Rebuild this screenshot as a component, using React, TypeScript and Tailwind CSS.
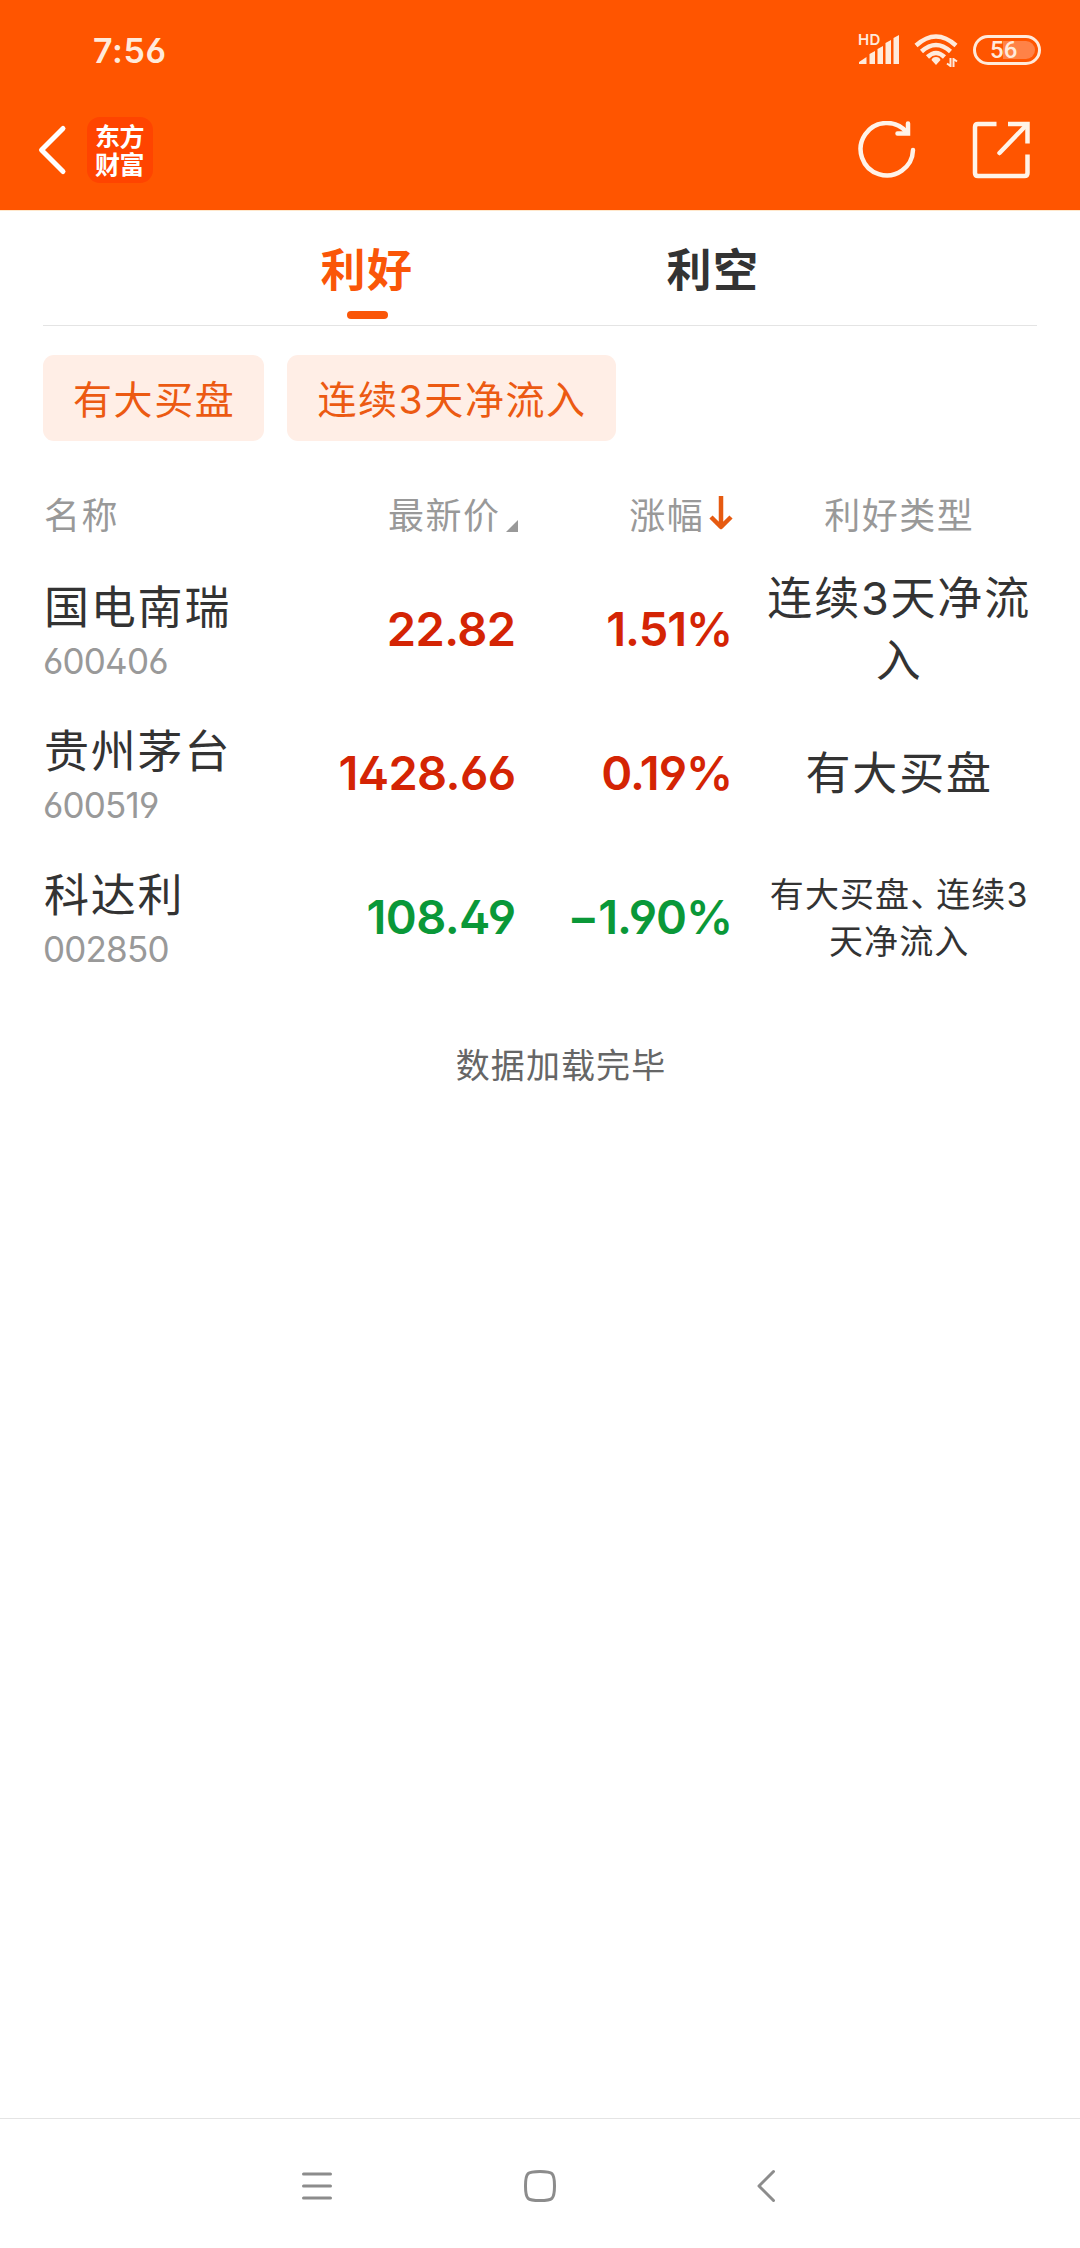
const TABS = [
  { label: '利好', active: true },
  { label: '利空', active: false },
];

const FILTERS = ['有大买盘', '连续3天净流入'];

const STOCKS = [
  { name: '国电南瑞', code: '600406', price: '22.82', change: '1.51%', up: true, types: ['连续3天净流入'] },
  { name: '贵州茅台', code: '600519', price: '1428.66', change: '0.19%', up: true, types: ['有大买盘'] },
  { name: '科达利', code: '002850', price: '108.49', change: '−1.90%', up: false, types: ['有大买盘', '连续3天净流入'] },
];

export default function App() {
  return (
    <div className="w-[1080px] h-[2248px] bg-white flex flex-col overflow-hidden text-[#333333] font-['Inter','Noto_Sans_CJK_SC',sans-serif]">
      <div className="h-[211px] shrink-0 bg-[#ff5500] border-b border-[#ffe8cc]">
        <StatusBar />
        <TitleBar />
      </div>

      <main className="flex-1 px-[43px]">
        <Tabs />
        <div className="flex gap-[23px] mt-[29px]">
          {FILTERS.map((f) => (
            <button key={f} className="h-[86px] pl-[30px] pr-[29px] rounded-[11px] bg-[#ffeee6] text-[#ec5a12] text-[39px] leading-[89px] tracking-[1.6px] whitespace-nowrap">
              {f}
            </button>
          ))}
        </div>
        <TableHead />
        {STOCKS.map((s) => (
          <StockRow key={s.code} {...s} />
        ))}
        <div className="mt-[52px] pl-[42px] text-center text-[34px] leading-[50px] tracking-[1.1px] text-[#666666]">数据加载完毕</div>
      </main>

      <NavBar />
    </div>
  );
}

function StatusBar() {
  return (
    <div className="h-[100px] pl-[93px] pr-[39px] flex items-center justify-between text-[#ffeadb]">
      <span className="mt-[2px] text-[34px] font-semibold leading-[40px] tracking-[0.6px] [font-feature-settings:'ss01']">7:56</span>
      <div className="flex items-center">
        <div className="relative w-[42px] h-[34px] mr-[14px]">
          <span className="absolute left-0 -top-[1px] text-[15px] font-semibold leading-[15px] tracking-[0.3px]">HD</span>
          <svg className="absolute inset-0" width="42" height="34" viewBox="0 0 42 34" fill="currentColor">
            <path d="M1 31V29L8.500 24V31Z M11.500 31V21L17 18V31Z M19.500 31V16L25 13V31Z M27.500 31V10L33 7V31Z M35.500 31V5L41 2V31Z" />
          </svg>
        </div>
        <svg className="mr-[15px]" width="44" height="34" viewBox="0 0 44 34" fill="none" stroke="currentColor" strokeWidth="4.500">
          <path d="M2 12.5Q22 -5.500 42 12.5" />
          <path d="M7.5 18.5Q22 5.500 36.500 18.5" />
          <path d="M13.500 24Q22 16 30.500 24" />
          <path d="M22 24a4.500 4 0 0 1 4.500 3L22 32L17.500 27a4.500 4 0 0 1 4.500-3Z" fill="currentColor" stroke="none" />
          <path d="M36.500 25V34M33 30.500L36.500 33M39.500 34V25M43 28.500L39.500 26" strokeWidth="2" />
        </svg>
        <div className="relative w-[68px] h-[30px] rounded-full border-[3px] border-[#ffeadb]">
          <div className="absolute right-[3px] top-[3px] w-[32px] h-[18px] rounded-r-full bg-[#ff8247]" />
          <span className="absolute left-[14px] top-0 text-[24px] leading-[25px] font-medium font-['Roboto',sans-serif]">56</span>
        </div>
      </div>
    </div>
  );
}

function TitleBar() {
  return (
    <div className="h-[100px] pl-[36px] pr-[50px] flex items-center justify-between text-white">
      <div className="flex items-center">
        <svg width="32" height="52" viewBox="0 0 32 52" fill="none" stroke="currentColor" strokeWidth="5" strokeLinecap="round" strokeLinejoin="round">
          <path d="M27 4.500L5.500 26L27 47.500" />
        </svg>
        <div className="ml-[19px] w-[66px] h-[66px] rounded-[13px] bg-[#ff4400] pb-[3px] pr-[1px] flex flex-col items-center justify-center text-[25px] leading-[28px] tracking-[-0.5px] font-bold font-['Noto_Sans_CJK_SC',sans-serif]">
          <span>东方</span>
          <span>财富</span>
        </div>
      </div>
      <div className="flex gap-[56px]">
        <svg width="58" height="58" viewBox="0 0 58 58" fill="none" stroke="#fff3e8" strokeWidth="4.500" strokeLinecap="round">
          <path d="M55 29A26.200 26.200 0 1 1 49 11.500" />
          <path d="M50 2.500V12.500H39.500" />
        </svg>
        <svg width="58" height="58" viewBox="0 0 58 58" fill="none" stroke="#fff3e8" strokeWidth="4.500">
          <path d="M24.500 3H6Q3 3 3 6V52Q3 55 6 55H52.500Q55.500 55 55.500 52V33.500" />
          <path d="M36 3H55.500V22.500" />
          <path d="M54 4.500L27.500 32" strokeLinecap="round" />
        </svg>
      </div>
    </div>
  );
}

function Tabs() {
  return (
    <div className="h-[115px] border-b border-[#e4e4e4] flex justify-center">
      {TABS.map((t) => (
        <div key={t.label} className={`w-[346px] pt-[27px] flex flex-col items-center ${t.active ? 'text-[#fa5608]' : 'text-[#333333]'}`}>
          <span className="text-[45px] leading-[66px] font-bold tracking-[1.5px]">{t.label}</span>
          {t.active && <div className="mt-[7px] w-[41px] h-[8px] rounded-full bg-[#fa5608]" />}
        </div>
      ))}
    </div>
  );
}

function TableHead() {
  return (
    <div className="mt-[45px] mb-[11px] h-[60px] flex items-center text-[36px] leading-[60px] tracking-[1.5px] text-[#999999] whitespace-nowrap">
      <div className="w-[230px] pl-[1px]">名称</div>
      <div className="w-[245px] flex justify-end items-center">
        最新价
        <svg className="ml-[5px] mt-[20px]" width="12" height="12" viewBox="0 0 12 12">
          <path d="M12 0V12H0Z" fill="#999999" />
        </svg>
      </div>
      <div className="w-[216px] flex justify-end items-center">
        涨幅
        <svg className="ml-[5px] mb-[7px]" width="24" height="36" viewBox="0 0 24 36" fill="none" stroke="#e65a10" strokeWidth="4.500">
          <path d="M12 1V32M2 22L12 32L22 22" strokeLinejoin="round" />
        </svg>
      </div>
      <div className="ml-[28px] w-[276px] text-center">利好类型</div>
    </div>
  );
}

function StockRow({ name, code, price, change, up, types }: any) {
  const color = up ? 'text-[#d42404]' : 'text-[#0a9838]';
  return (
    <div className="h-[144px] flex items-center">
      <div className="w-[230px] pt-[6px] flex flex-col">
        <span className="pl-[1px] text-[45px] leading-[58px] tracking-[1.8px] whitespace-nowrap">{name}</span>
        <span className="text-[35px] leading-[49px] tracking-[-0.8px] text-[#999999] [font-feature-settings:'ss01']">{code}</span>
      </div>
      <div className={`w-[243px] text-right text-[47px] font-semibold tracking-[-0.6px] [font-feature-settings:'ss01'] ${color}`}>{price}</div>
      <div className={`w-[217px] text-right text-[47px] font-semibold tracking-[-1px] [font-feature-settings:'ss01'] ${color}`}>{change}</div>
      <div className={`ml-[29px] pt-[2px] w-[276px] text-center ${types.length > 1 ? 'text-[34px] leading-[47px] tracking-[1.1px]' : 'text-[45px] leading-[62px] tracking-[1.8px]'}`}>
        {types.map((t: string, i: number) => (
          <span key={t}>
            {i > 0 && <span className="inline-block w-[26px] text-left [font-feature-settings:'halt']">、</span>}
            {t}
          </span>
        ))}
      </div>
    </div>
  );
}

function NavBar() {
  return (
    <div className="h-[130px] shrink-0 border-t border-[#e4e4e4] pt-[4px] pl-[301px] pr-[304px] flex items-center">
      <svg width="32" height="34" viewBox="0 0 32 34" stroke="#8c8c8c" strokeWidth="3" strokeLinecap="round">
        <path d="M2.500 5H29.500M2.500 17H29.500M2.500 29H29.500" />
      </svg>
      <svg className="ml-[190px]" width="34" height="34" viewBox="0 0 34 34" fill="none" stroke="#8c8c8c" strokeWidth="3">
        <path d="M17 2.500C29.500 2.500 31.500 3.500 31.500 17S29.500 31.500 17 31.500S2.500 30.500 2.500 17S4.500 2.500 17 2.500Z" />
      </svg>
      <svg className="ml-auto" width="20" height="34" viewBox="0 0 20 34" fill="none" stroke="#8c8c8c" strokeWidth="3" strokeLinecap="round" strokeLinejoin="round">
        <path d="M17.500 2.500L3 17L17.500 31.500" />
      </svg>
    </div>
  );
}
